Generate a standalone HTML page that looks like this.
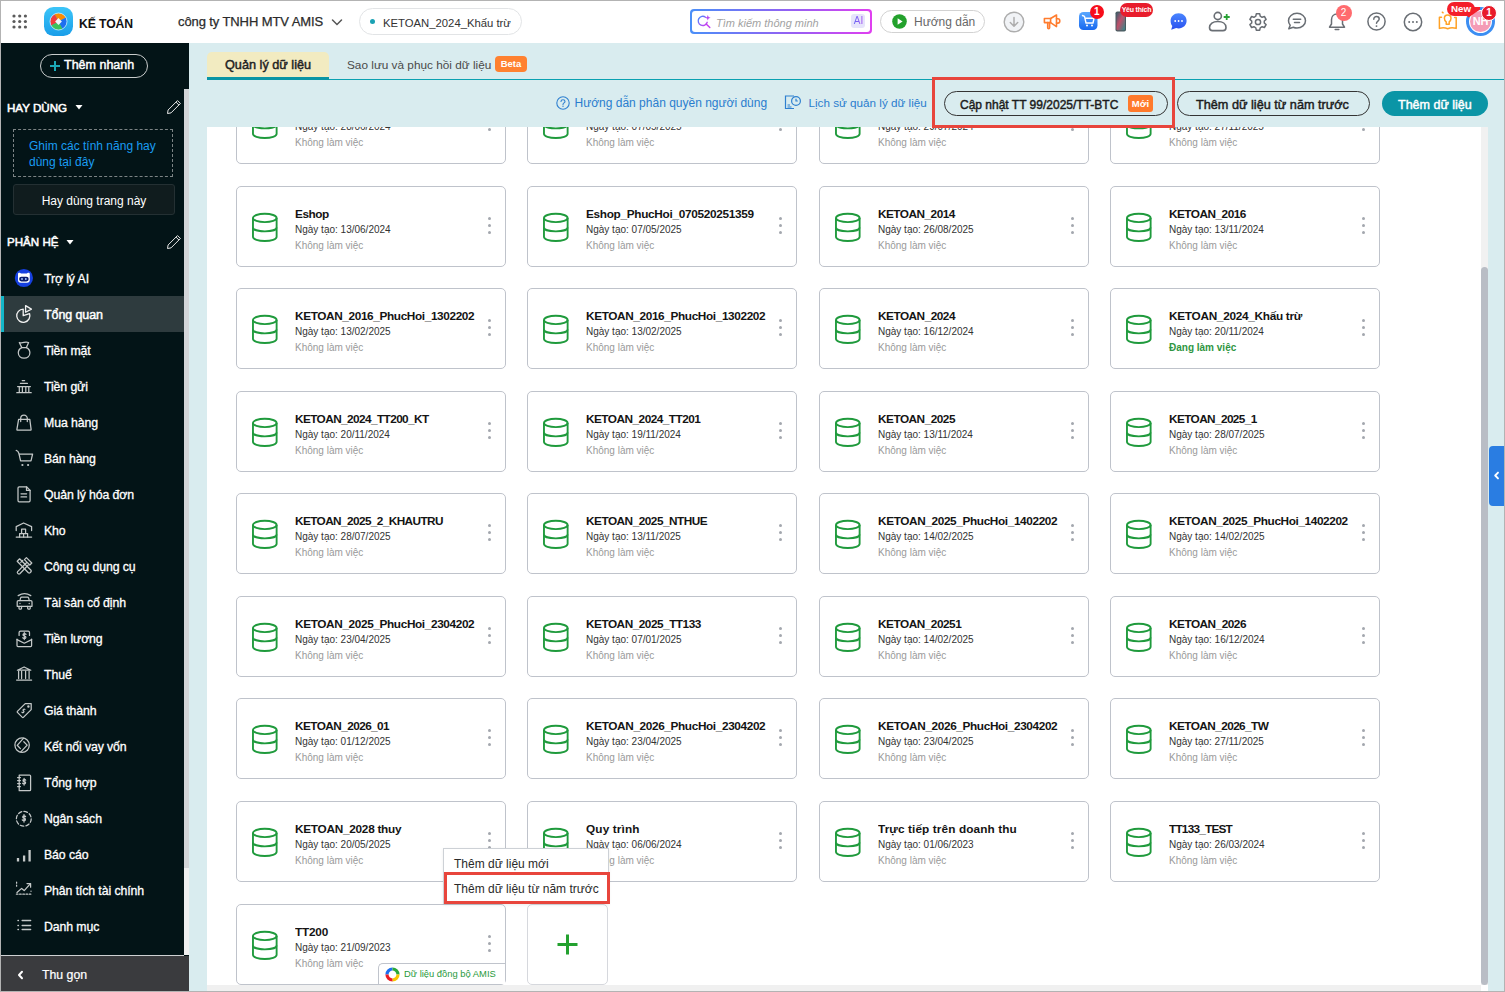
<!DOCTYPE html>
<html><head><meta charset="utf-8"><style>
*{box-sizing:border-box;margin:0;padding:0}
html,body{width:1505px;height:992px;overflow:hidden;background:#d9ecef;font-family:"Liberation Sans", sans-serif;color:#1f1f1f}
.a{position:absolute}
#frame{position:absolute;left:0;top:0;width:1505px;height:992px;border:1px solid #b3b3b3;pointer-events:none;z-index:50}
#hdr{position:absolute;left:0;top:0;width:1505px;height:43px;background:#fff}
#side{position:absolute;left:0;top:43px;width:189px;height:949px;background:#031417}
.si{position:absolute;left:1px;width:183px;height:36px}
.si.act{background:#2e3b3e}
.si.act:before{content:"";position:absolute;left:0;top:0;width:3px;height:36px;background:#13b6c8}
.sic{position:absolute;left:14px;top:8px;width:20px;height:20px}
.sic svg{display:block}
.stx{position:absolute;left:43px;top:10.6px;font-size:12.3px;line-height:16px;color:#fff;white-space:nowrap;letter-spacing:-0.1px;-webkit-text-stroke:0.3px #fff}
.si.act .stx{font-size:12.5px;-webkit-text-stroke:0.45px #fff}
#main{position:absolute;left:189px;top:43px;width:1316px;height:949px;background:#d9ecef}
#panel{position:absolute;left:207px;top:127px;width:1274px;height:858px;background:#fff;overflow:hidden}
.card{position:absolute;width:270px;height:81px;border:1px solid #bfc3cb;border-radius:5px;background:#fff}
.card .db{position:absolute;left:13.6px;top:24.6px}
.card .tt{position:absolute;left:58px;top:20px;width:180px;overflow:hidden;white-space:nowrap;font-size:11.8px;font-weight:bold;line-height:14px;color:#141414}
.card .dt{position:absolute;left:58px;top:36px;font-size:10px;line-height:13px;color:#333;white-space:nowrap}
.card .st{position:absolute;left:58px;top:52px;font-size:10px;line-height:13px;color:#9a9a9a;white-space:nowrap}
.card .st.act{color:#2f9642;font-weight:bold}
.kb{position:absolute;left:251px;top:30px;width:5px;height:20px}
.kb i{display:block;width:3px;height:3px;border-radius:50%;background:#a3a7ae;margin:0 0 3.8px 0}
</style></head><body>

<div id="hdr">
 <svg class="a" style="left:11px;top:13px" width="18" height="17" viewBox="0 0 18 17"><g fill="#5b5b5b"><circle cx="3" cy="3" r="1.6"/><circle cx="8.7" cy="3" r="1.6"/><circle cx="14.4" cy="3" r="1.6"/><circle cx="3" cy="8.5" r="1.6"/><circle cx="8.7" cy="8.5" r="1.6"/><circle cx="14.4" cy="8.5" r="1.6"/><circle cx="3" cy="14" r="1.6"/><circle cx="8.7" cy="14" r="1.6"/><circle cx="14.4" cy="14" r="1.6"/></g></svg>
 <svg class="a" style="left:44px;top:7px" width="29" height="29" viewBox="0 0 29 29"><defs><linearGradient id="lg1" x1="0" y1="0" x2="0" y2="1"><stop offset="0" stop-color="#3cc5f8"/><stop offset="1" stop-color="#1a9ee9"/></linearGradient><clipPath id="cc"><circle cx="14.5" cy="14.5" r="8.3"/></clipPath></defs><rect x="0" y="0" width="29" height="29" rx="9.5" fill="url(#lg1)"/><g clip-path="url(#cc)" transform="rotate(62 14.5 14.5)"><rect x="4" y="4" width="10.5" height="10.5" fill="#fb8c00"/><rect x="14.5" y="4" width="10.5" height="10.5" fill="#1e6ff0"/><rect x="14.5" y="14.5" width="10.5" height="10.5" fill="#3cc25a"/><rect x="4" y="14.5" width="10.5" height="10.5" fill="#f23b3b"/></g><rect x="12.1" y="12.1" width="4.8" height="4.8" fill="#eef6fb" transform="rotate(45 14.5 14.5)"/><circle cx="14.5" cy="14.5" r="8.5" fill="none" stroke="#e8f6fd" stroke-width="0.7"/></svg>
 <div class="a" style="left:79px;top:16px;font-size:12.2px;font-weight:bold;line-height:16px;color:#111;letter-spacing:-0.1px">KẾ TOÁN</div>
 <div class="a" style="left:178px;top:13px;font-size:13px;line-height:17px;color:#2b2b2b;letter-spacing:-0.1px;-webkit-text-stroke:0.25px #2b2b2b">công ty TNHH MTV AMIS</div>
 <svg class="a" style="left:331px;top:17px" width="12" height="10" viewBox="0 0 12 10"><path d="M1.5 3L6 7.5L10.5 3" fill="none" stroke="#555" stroke-width="1.5" stroke-linecap="round"/></svg>
 <div class="a" style="left:359px;top:8px;width:163px;height:27px;border:1px solid #e2e4e6;border-radius:14px"></div>
 <div class="a" style="left:369.5px;top:18.6px;width:5.5px;height:5.5px;border-radius:50%;background:#1aa2b4"></div>
 <div class="a" style="left:383px;top:16px;font-size:11.3px;line-height:15px;color:#333;white-space:nowrap">KETOAN_2024_Khấu trừ</div>

 <div class="a" style="left:690px;top:9px;width:182px;height:25px;border-radius:4px;background:linear-gradient(90deg,#4a8ff8,#9b5cf2 60%,#e03ff0)"></div>
 <div class="a" style="left:691.6px;top:10.6px;width:178.8px;height:21.8px;border-radius:3px;background:#fff"></div>
 <svg class="a" style="left:697px;top:14px" width="15" height="15" viewBox="0 0 15 15"><defs><linearGradient id="lg2" x1="0" y1="0" x2="1" y2="1"><stop offset="0" stop-color="#3f8cff"/><stop offset="1" stop-color="#d33cf0"/></linearGradient></defs><path d="M8.5 3.2A4.6 4.6 0 1 0 10.2 8.3" fill="none" stroke="url(#lg2)" stroke-width="1.4" stroke-linecap="round"/><path d="M9.2 10L12.8 13.6" stroke="#c43cf0" stroke-width="1.4" stroke-linecap="round"/><path d="M10.8 1L11.6 3L13.6 3.8L11.6 4.6L10.8 6.6L10 4.6L8 3.8L10 3Z" fill="#b84cf2"/></svg>
 <div class="a" style="left:716px;top:16px;font-size:11px;font-style:italic;line-height:14px;color:#a2a2a2;white-space:nowrap">Tìm kiếm thông minh</div>
 <div class="a" style="left:851px;top:14px;width:14px;height:14px;border-radius:3px;background:#e6e4fb"></div>
 <div class="a" style="left:852px;top:15px;width:13px;font-size:10px;line-height:12px;text-align:center;background:linear-gradient(90deg,#5a6cf5,#b24cf0);-webkit-background-clip:text;color:transparent">AI</div>

 <div class="a" style="left:880px;top:10px;width:105px;height:23px;border:1px solid #d2d2d2;border-radius:12px"></div>
 <svg class="a" style="left:892px;top:13.5px" width="15" height="15" viewBox="0 0 15 15"><circle cx="7.5" cy="7.5" r="7.3" fill="#23a12c"/><path d="M5.6 4.2L10.6 7.5L5.6 10.8Z" fill="#fff"/></svg>
 <div class="a" style="left:914px;top:15px;font-size:12px;line-height:15px;color:#676767;white-space:nowrap">Hướng dẫn</div>

 <svg class="a" style="left:1003px;top:10.5px" width="22" height="22" viewBox="0 0 22 22"><circle cx="11" cy="11" r="9.8" fill="#f1f3f6" stroke="#adadad" stroke-width="1.4"/><path d="M11 6.5V15M7.3 11.5L11 15.2L14.7 11.5" fill="none" stroke="#adadad" stroke-width="1.5" stroke-linecap="round" stroke-linejoin="round"/></svg>
 <svg class="a" style="left:1042px;top:13px" width="20" height="18" viewBox="0 0 20 18"><g fill="none" stroke="#ff7c2e" stroke-width="1.6" stroke-linejoin="round" stroke-linecap="round"><path d="M2.4 5.5H8.6V9.6H2.4Z"/><path d="M8.6 5.5L14.5 2V13.6L8.6 9.6"/><path d="M14.5 5.7H15.8C17.2 5.7 17.8 6.8 17.8 7.9C17.8 9 17.2 10.1 15.8 10.1H14.5"/><path d="M5.7 9.6V14.8C5.7 15.5 6.1 15.8 6.7 15.8C7.3 15.8 7.6 15.5 7.6 14.8V9.6"/></g></svg>
 <svg class="a" style="left:1079px;top:12px" width="19" height="18" viewBox="0 0 19 18"><defs><linearGradient id="lg3" x1="0" y1="0" x2="0" y2="1"><stop offset="0" stop-color="#5aa8ff"/><stop offset="1" stop-color="#1768ef"/></linearGradient></defs><rect width="18.5" height="18" rx="4.5" fill="url(#lg3)"/><path d="M3.5 3.5L5.5 4.3L7 11H14L15 6.3H6" fill="none" stroke="#fff" stroke-width="1.4" stroke-linejoin="round" stroke-linecap="round"/><circle cx="8" cy="13.6" r="1" fill="#fff"/><circle cx="13" cy="13.6" r="1" fill="#fff"/></svg>
 <div class="a" style="left:1089.5px;top:4.5px;width:14.5px;height:14.5px;border-radius:50%;background:#f70d1a;color:#fff;font-size:10px;font-weight:bold;line-height:14.5px;text-align:center">1</div>

 <svg class="a" style="left:1115px;top:11px" width="12" height="21" viewBox="0 0 12 21"><defs><linearGradient id="lg4" x1="0" y1="0" x2="1" y2="1"><stop offset="0" stop-color="#3b5f70"/><stop offset="0.45" stop-color="#c0506a"/><stop offset="1" stop-color="#2f8a8a"/></linearGradient></defs><rect x="0.5" y="0.5" width="10.5" height="20" rx="1.8" fill="#4a5a60"/><rect x="1.5" y="1.8" width="8.5" height="17.4" rx="1" fill="url(#lg4)"/></svg>
 <div class="a" style="left:1120px;top:3px;width:33px;height:14px;border-radius:7px;background:#e81c2c;color:#fff;font-size:7px;font-weight:bold;line-height:14px;text-align:center;white-space:nowrap;letter-spacing:-0.2px">Yêu thích</div>

 <svg class="a" style="left:1169px;top:12px" width="19" height="19" viewBox="0 0 19 19"><defs><linearGradient id="lg5" x1="0" y1="0" x2="0" y2="1"><stop offset="0" stop-color="#4a86ff"/><stop offset="1" stop-color="#2a50ee"/></linearGradient></defs><path d="M9.6 1.2C14.2 1.2 17.6 4.5 17.6 8.8S14.2 16.4 9.6 16.4C8.7 16.4 7.9 16.3 7.2 16L2.2 17.8L3.3 14C2.2 12.7 1.6 10.9 1.6 8.8C1.6 4.5 5 1.2 9.6 1.2Z" fill="url(#lg5)"/><circle cx="6.2" cy="9" r="0.9" fill="#fff"/><circle cx="9.6" cy="9" r="0.9" fill="#fff"/><circle cx="13" cy="9" r="0.9" fill="#fff"/></svg>
 <svg class="a" style="left:1207px;top:11px" width="24" height="21" viewBox="0 0 24 21"><g fill="none" stroke="#696e74" stroke-width="1.6"><circle cx="10.8" cy="5" r="3.6"/><path d="M2.5 16.5C2.5 12.8 6 10.5 10.8 10.5S19 12.8 19 16.5C19 18.8 17.5 19.6 16 19.6H5.5C4 19.6 2.5 18.8 2.5 16.5Z"/></g><path d="M19.7 3V9M16.7 6H22.7" stroke="#2aa236" stroke-width="1.8"/></svg>
 <svg class="a" style="left:1248px;top:12px" width="20" height="20" viewBox="0 0 20 20"><path d="M8.3 1.8H11.7L12.2 4.2L14.1 5.3L16.4 4.5L18.1 7.4L16.3 9V11L18.1 12.6L16.4 15.5L14.1 14.7L12.2 15.8L11.7 18.2H8.3L7.8 15.8L5.9 14.7L3.6 15.5L1.9 12.6L3.7 11V9L1.9 7.4L3.6 4.5L5.9 5.3L7.8 4.2Z" fill="none" stroke="#696e74" stroke-width="1.5" stroke-linejoin="round"/><circle cx="10" cy="10" r="2.6" fill="none" stroke="#696e74" stroke-width="1.5"/></svg>
 <svg class="a" style="left:1287px;top:12px" width="20" height="19" viewBox="0 0 20 19"><path d="M10 1.3C14.7 1.3 18.5 4.7 18.5 8.7S14.7 16.1 10 16.1C8.6 16.1 7.4 15.8 6.3 15.3L1.8 16.8L3.2 13.2C2.1 11.9 1.5 10.4 1.5 8.7C1.5 4.7 5.3 1.3 10 1.3Z" fill="none" stroke="#696e74" stroke-width="1.5" stroke-linejoin="round"/><path d="M6.3 7.2H13.7M7.5 10.4H12.5" stroke="#696e74" stroke-width="1.5" stroke-linecap="round"/></svg>
 <svg class="a" style="left:1327px;top:12px" width="20" height="20" viewBox="0 0 20 20"><path d="M10 2C6.6 2 4.5 4.6 4.5 7.8V12L2.5 15.2H17.5L15.5 12V7.8C15.5 4.6 13.4 2 10 2Z" fill="none" stroke="#696e74" stroke-width="1.5" stroke-linejoin="round"/><path d="M8.2 17.6H11.8" stroke="#696e74" stroke-width="1.5" stroke-linecap="round"/></svg>
 <div class="a" style="left:1335.5px;top:5px;width:16px;height:16px;border-radius:50%;background:#ff6b6e;color:#fff;font-size:10px;line-height:16px;text-align:center">2</div>
 <svg class="a" style="left:1366px;top:11px" width="21" height="21" viewBox="0 0 21 21"><circle cx="10.5" cy="10.5" r="8.6" fill="none" stroke="#696e74" stroke-width="1.5"/><path d="M7.8 8.2C7.8 6.6 9 5.6 10.5 5.6S13.2 6.6 13.2 8.1C13.2 10 10.5 10.2 10.5 12.3" fill="none" stroke="#696e74" stroke-width="1.5" stroke-linecap="round"/><circle cx="10.5" cy="15.1" r="0.95" fill="#696e74"/></svg>
 <svg class="a" style="left:1403px;top:12px" width="20" height="20" viewBox="0 0 20 20"><circle cx="10" cy="10" r="8.7" fill="none" stroke="#696e74" stroke-width="1.5"/><circle cx="6.2" cy="10" r="1" fill="#696e74"/><circle cx="10" cy="10" r="1" fill="#696e74"/><circle cx="13.8" cy="10" r="1" fill="#696e74"/></svg>
 <svg class="a" style="left:1438px;top:10px" width="20" height="20" viewBox="0 0 20 20"><g fill="none" stroke="#ffa126" stroke-width="1.5" stroke-linejoin="round" stroke-linecap="round"><path d="M3.5 7.2H1.4V18.4C4.4 17.5 7 17.6 9.7 18.7C12.4 17.6 15 17.5 18.2 18.4V7.4H16.6"/><path d="M8.2 11.8C7.2 11.1 6.4 10 6.4 8.3C6.4 6.4 7.9 4.9 9.7 4.9S13 6.4 13 8.3C13 10 12.2 11.1 11.2 11.8V14.2H8.2Z"/><path d="M4.3 2.2L5.1 2.8"/></g></svg>
 
 <div class="a" style="left:1466px;top:7px;width:29px;height:29px;border-radius:50%;background:#3c8ef2"></div>
 <div class="a" style="left:1469px;top:10px;width:23px;height:23px;border-radius:50%;background:#fff"></div>
 <div class="a" style="left:1470px;top:11px;width:21px;height:21px;border-radius:50%;background:#f49bb6;color:#fff;font-size:11px;font-weight:bold;line-height:21px;text-align:center;letter-spacing:-0.3px">NH</div>
 <svg class="a" style="left:1460px;top:5px" width="22" height="14" viewBox="0 0 22 14"><path d="M5 8L8.5 12.6L20 4.6V2H12Z" fill="#f41f2a"/></svg><div class="a" style="left:1447px;top:2px;width:28px;height:14px;border-radius:7px;background:#f41f2a;color:#fff;font-size:9.8px;font-weight:bold;line-height:14px;text-align:center;letter-spacing:-0.1px">New</div>
 <div class="a" style="left:1481px;top:5px;width:16px;height:16px;border-radius:50%;background:#e81b2b;border:1px solid #fff;color:#fff;font-size:10px;font-weight:bold;line-height:14px;text-align:center">1</div>
</div>

<div id="side"></div>
<div id="main"></div>
<div class="a" style="left:207px;top:79px;width:1298px;height:1px;background:#0aa1b1"></div>
<div class="a" style="left:207px;top:52px;width:122px;height:28px;border-radius:5px 5px 0 0;background:#f2ebc1"></div>
<div class="a" style="left:207px;top:77px;width:122px;height:3px;background:#0a95a5"></div>
<div class="a" style="left:225px;top:58px;font-size:12.7px;line-height:15px;color:#222;-webkit-text-stroke:0.45px #222;white-space:nowrap">Quản lý dữ liệu</div>
<div class="a" style="left:347px;top:58px;font-size:11.8px;line-height:15px;color:#4a4a4a;white-space:nowrap">Sao lưu và phục hồi dữ liệu</div>
<div class="a" style="left:495px;top:56px;width:32px;height:16px;border-radius:4px;background:#ff8130;color:#fff;font-size:9.5px;font-weight:bold;line-height:16px;text-align:center">Beta</div>

<svg class="a" style="left:556px;top:96px" width="14" height="14" viewBox="0 0 14 14"><circle cx="7" cy="7" r="6.2" fill="none" stroke="#2f80d0" stroke-width="1.1"/><path d="M5 5.5C5 4.4 5.9 3.7 7 3.7S9 4.4 9 5.4C9 6.8 7 6.9 7 8.4" fill="none" stroke="#2f80d0" stroke-width="1.1" stroke-linecap="round"/><circle cx="7" cy="10.2" r="0.7" fill="#2f80d0"/></svg>
<div class="a" style="left:574.5px;top:96px;font-size:12px;line-height:15px;color:#2a7dce;white-space:nowrap">Hướng dẫn phân quyền người dùng</div>
<svg class="a" style="left:784px;top:95px" width="18" height="15" viewBox="0 0 18 15"><g fill="none" stroke="#2f80d0" stroke-width="1.2"><path d="M10 1H1.5V13.5H10"/><path d="M3.5 10H6M3.5 12H7.5"/><circle cx="12" cy="6" r="4.4"/><path d="M12 3.8V6H13.8"/></g></svg>
<div class="a" style="left:808.5px;top:95px;font-size:11.7px;line-height:15px;color:#2a7dce;white-space:nowrap">Lịch sử quản lý dữ liệu</div>

<div class="a" style="left:944px;top:91px;width:224px;height:25px;border:1px solid #343434;border-radius:13px"></div>
<div class="a" style="left:960px;top:97.6px;font-size:12px;line-height:15px;color:#1c1c1c;-webkit-text-stroke:0.45px #1c1c1c;white-space:nowrap">Cập nhật TT 99/2025/TT-BTC</div>
<div class="a" style="left:1128px;top:95px;width:25px;height:17px;border-radius:3px;background:#ff7a2c;color:#fff;font-size:9.5px;font-weight:bold;line-height:17px;text-align:center">Mới</div>
<div class="a" style="left:932px;top:77px;width:243px;height:51px;border:3px solid #e8453c;z-index:10"></div>
<div class="a" style="left:1177px;top:91px;width:193px;height:25px;border:1px solid #343434;border-radius:13px"></div>
<div class="a" style="left:1196px;top:97.6px;font-size:12.7px;line-height:15px;color:#1c1c1c;-webkit-text-stroke:0.45px #1c1c1c;white-space:nowrap">Thêm dữ liệu từ năm trước</div>
<div class="a" style="left:1382px;top:91px;width:106px;height:25px;border-radius:13px;background:#0b95a6"></div>
<div class="a" style="left:1398px;top:97.6px;font-size:12.5px;line-height:15px;color:#fff;-webkit-text-stroke:0.45px #fff;white-space:nowrap">Thêm dữ liệu</div>

<div class="a" style="left:1481px;top:127px;width:7px;height:858px;background:#f1f1f1"></div>
<div class="a" style="left:1481px;top:267px;width:7px;height:718px;border-radius:3.5px;background:#b9bdc5"></div><div class="a" style="left:1481px;top:985px;width:7px;height:6px;background:#fff"></div>
<div class="a" style="left:207px;top:985px;width:1274px;height:6px;background:#f0f0f0"></div>
<div class="a" style="left:1489px;top:446px;width:16px;height:60px;border-radius:4px 0 0 4px;background:#2a7de2"></div>
<svg class="a" style="left:1492px;top:470px" width="8" height="10" viewBox="0 0 8 10"><path d="M6 2.6L3.2 5.5L6 8.4" fill="none" stroke="#fff" stroke-width="1.9" stroke-linecap="round" stroke-linejoin="round"/></svg>

<div id="panel"><div style="position:absolute;left:-207px;top:-127px;width:1505px;height:992px">
<div class="card" style="left:236px;top:83.0px"><svg class="db" width="27.6" height="30" viewBox="-1 -1 28 30.4"><g fill="none" stroke="#1f9a3c" stroke-width="1.9"><ellipse cx="13" cy="5" rx="12" ry="4.2"/><path d="M1 5V24C1 26.6 6.4 28.4 13 28.4S25 26.6 25 24V5"/><path d="M1 14.6C1 17 6.4 18.6 13 18.6S25 17 25 14.6"/></g></svg><div class="tt" style="letter-spacing:-0.4px">KETOAN_2012</div><div class="dt">Ngày tạo: 28/06/2024</div><div class="st">Không làm việc</div><div class="kb"><i></i><i></i><i></i></div></div>
<div class="card" style="left:527px;top:83.0px"><svg class="db" width="27.6" height="30" viewBox="-1 -1 28 30.4"><g fill="none" stroke="#1f9a3c" stroke-width="1.9"><ellipse cx="13" cy="5" rx="12" ry="4.2"/><path d="M1 5V24C1 26.6 6.4 28.4 13 28.4S25 26.6 25 24V5"/><path d="M1 14.6C1 17 6.4 18.6 13 18.6S25 17 25 14.6"/></g></svg><div class="tt" style="letter-spacing:-0.4px">KETOAN_2013</div><div class="dt">Ngày tạo: 07/05/2025</div><div class="st">Không làm việc</div><div class="kb"><i></i><i></i><i></i></div></div>
<div class="card" style="left:819px;top:83.0px"><svg class="db" width="27.6" height="30" viewBox="-1 -1 28 30.4"><g fill="none" stroke="#1f9a3c" stroke-width="1.9"><ellipse cx="13" cy="5" rx="12" ry="4.2"/><path d="M1 5V24C1 26.6 6.4 28.4 13 28.4S25 26.6 25 24V5"/><path d="M1 14.6C1 17 6.4 18.6 13 18.6S25 17 25 14.6"/></g></svg><div class="tt" style="letter-spacing:-0.4px">KETOAN_2013_1</div><div class="dt">Ngày tạo: 29/07/2024</div><div class="st">Không làm việc</div><div class="kb"><i></i><i></i><i></i></div></div>
<div class="card" style="left:1110px;top:83.0px"><svg class="db" width="27.6" height="30" viewBox="-1 -1 28 30.4"><g fill="none" stroke="#1f9a3c" stroke-width="1.9"><ellipse cx="13" cy="5" rx="12" ry="4.2"/><path d="M1 5V24C1 26.6 6.4 28.4 13 28.4S25 26.6 25 24V5"/><path d="M1 14.6C1 17 6.4 18.6 13 18.6S25 17 25 14.6"/></g></svg><div class="tt" style="letter-spacing:-0.4px">KETOAN_2013_2</div><div class="dt">Ngày tạo: 27/11/2025</div><div class="st">Không làm việc</div><div class="kb"><i></i><i></i><i></i></div></div>
<div class="card" style="left:236px;top:186.0px"><svg class="db" width="27.6" height="30" viewBox="-1 -1 28 30.4"><g fill="none" stroke="#1f9a3c" stroke-width="1.9"><ellipse cx="13" cy="5" rx="12" ry="4.2"/><path d="M1 5V24C1 26.6 6.4 28.4 13 28.4S25 26.6 25 24V5"/><path d="M1 14.6C1 17 6.4 18.6 13 18.6S25 17 25 14.6"/></g></svg><div class="tt" style="letter-spacing:-0.452px">Eshop</div><div class="dt">Ngày tạo: 13/06/2024</div><div class="st">Không làm việc</div><div class="kb"><i></i><i></i><i></i></div></div>
<div class="card" style="left:527px;top:186.0px"><svg class="db" width="27.6" height="30" viewBox="-1 -1 28 30.4"><g fill="none" stroke="#1f9a3c" stroke-width="1.9"><ellipse cx="13" cy="5" rx="12" ry="4.2"/><path d="M1 5V24C1 26.6 6.4 28.4 13 28.4S25 26.6 25 24V5"/><path d="M1 14.6C1 17 6.4 18.6 13 18.6S25 17 25 14.6"/></g></svg><div class="tt" style="letter-spacing:-0.31px">Eshop_PhucHoi_070520251359</div><div class="dt">Ngày tạo: 07/05/2025</div><div class="st">Không làm việc</div><div class="kb"><i></i><i></i><i></i></div></div>
<div class="card" style="left:819px;top:186.0px"><svg class="db" width="27.6" height="30" viewBox="-1 -1 28 30.4"><g fill="none" stroke="#1f9a3c" stroke-width="1.9"><ellipse cx="13" cy="5" rx="12" ry="4.2"/><path d="M1 5V24C1 26.6 6.4 28.4 13 28.4S25 26.6 25 24V5"/><path d="M1 14.6C1 17 6.4 18.6 13 18.6S25 17 25 14.6"/></g></svg><div class="tt" style="letter-spacing:-0.51px">KETOAN_2014</div><div class="dt">Ngày tạo: 26/08/2025</div><div class="st">Không làm việc</div><div class="kb"><i></i><i></i><i></i></div></div>
<div class="card" style="left:1110px;top:186.0px"><svg class="db" width="27.6" height="30" viewBox="-1 -1 28 30.4"><g fill="none" stroke="#1f9a3c" stroke-width="1.9"><ellipse cx="13" cy="5" rx="12" ry="4.2"/><path d="M1 5V24C1 26.6 6.4 28.4 13 28.4S25 26.6 25 24V5"/><path d="M1 14.6C1 17 6.4 18.6 13 18.6S25 17 25 14.6"/></g></svg><div class="tt" style="letter-spacing:-0.51px">KETOAN_2016</div><div class="dt">Ngày tạo: 13/11/2024</div><div class="st">Không làm việc</div><div class="kb"><i></i><i></i><i></i></div></div>
<div class="card" style="left:236px;top:288.0px"><svg class="db" width="27.6" height="30" viewBox="-1 -1 28 30.4"><g fill="none" stroke="#1f9a3c" stroke-width="1.9"><ellipse cx="13" cy="5" rx="12" ry="4.2"/><path d="M1 5V24C1 26.6 6.4 28.4 13 28.4S25 26.6 25 24V5"/><path d="M1 14.6C1 17 6.4 18.6 13 18.6S25 17 25 14.6"/></g></svg><div class="tt" style="letter-spacing:-0.374px">KETOAN_2016_PhucHoi_1302202</div><div class="dt">Ngày tạo: 13/02/2025</div><div class="st">Không làm việc</div><div class="kb"><i></i><i></i><i></i></div></div>
<div class="card" style="left:527px;top:288.0px"><svg class="db" width="27.6" height="30" viewBox="-1 -1 28 30.4"><g fill="none" stroke="#1f9a3c" stroke-width="1.9"><ellipse cx="13" cy="5" rx="12" ry="4.2"/><path d="M1 5V24C1 26.6 6.4 28.4 13 28.4S25 26.6 25 24V5"/><path d="M1 14.6C1 17 6.4 18.6 13 18.6S25 17 25 14.6"/></g></svg><div class="tt" style="letter-spacing:-0.374px">KETOAN_2016_PhucHoi_1302202</div><div class="dt">Ngày tạo: 13/02/2025</div><div class="st">Không làm việc</div><div class="kb"><i></i><i></i><i></i></div></div>
<div class="card" style="left:819px;top:288.0px"><svg class="db" width="27.6" height="30" viewBox="-1 -1 28 30.4"><g fill="none" stroke="#1f9a3c" stroke-width="1.9"><ellipse cx="13" cy="5" rx="12" ry="4.2"/><path d="M1 5V24C1 26.6 6.4 28.4 13 28.4S25 26.6 25 24V5"/><path d="M1 14.6C1 17 6.4 18.6 13 18.6S25 17 25 14.6"/></g></svg><div class="tt" style="letter-spacing:-0.492px">KETOAN_2024</div><div class="dt">Ngày tạo: 16/12/2024</div><div class="st">Không làm việc</div><div class="kb"><i></i><i></i><i></i></div></div>
<div class="card" style="left:1110px;top:288.0px"><svg class="db" width="27.6" height="30" viewBox="-1 -1 28 30.4"><g fill="none" stroke="#1f9a3c" stroke-width="1.9"><ellipse cx="13" cy="5" rx="12" ry="4.2"/><path d="M1 5V24C1 26.6 6.4 28.4 13 28.4S25 26.6 25 24V5"/><path d="M1 14.6C1 17 6.4 18.6 13 18.6S25 17 25 14.6"/></g></svg><div class="tt" style="letter-spacing:-0.29px">KETOAN_2024_Khấu trừ</div><div class="dt">Ngày tạo: 20/11/2024</div><div class="st act">Đang làm việc</div><div class="kb"><i></i><i></i><i></i></div></div>
<div class="card" style="left:236px;top:391.0px"><svg class="db" width="27.6" height="30" viewBox="-1 -1 28 30.4"><g fill="none" stroke="#1f9a3c" stroke-width="1.9"><ellipse cx="13" cy="5" rx="12" ry="4.2"/><path d="M1 5V24C1 26.6 6.4 28.4 13 28.4S25 26.6 25 24V5"/><path d="M1 14.6C1 17 6.4 18.6 13 18.6S25 17 25 14.6"/></g></svg><div class="tt" style="letter-spacing:-0.587px">KETOAN_2024_TT200_KT</div><div class="dt">Ngày tạo: 20/11/2024</div><div class="st">Không làm việc</div><div class="kb"><i></i><i></i><i></i></div></div>
<div class="card" style="left:527px;top:391.0px"><svg class="db" width="27.6" height="30" viewBox="-1 -1 28 30.4"><g fill="none" stroke="#1f9a3c" stroke-width="1.9"><ellipse cx="13" cy="5" rx="12" ry="4.2"/><path d="M1 5V24C1 26.6 6.4 28.4 13 28.4S25 26.6 25 24V5"/><path d="M1 14.6C1 17 6.4 18.6 13 18.6S25 17 25 14.6"/></g></svg><div class="tt" style="letter-spacing:-0.509px">KETOAN_2024_TT201</div><div class="dt">Ngày tạo: 19/11/2024</div><div class="st">Không làm việc</div><div class="kb"><i></i><i></i><i></i></div></div>
<div class="card" style="left:819px;top:391.0px"><svg class="db" width="27.6" height="30" viewBox="-1 -1 28 30.4"><g fill="none" stroke="#1f9a3c" stroke-width="1.9"><ellipse cx="13" cy="5" rx="12" ry="4.2"/><path d="M1 5V24C1 26.6 6.4 28.4 13 28.4S25 26.6 25 24V5"/><path d="M1 14.6C1 17 6.4 18.6 13 18.6S25 17 25 14.6"/></g></svg><div class="tt" style="letter-spacing:-0.492px">KETOAN_2025</div><div class="dt">Ngày tạo: 13/11/2024</div><div class="st">Không làm việc</div><div class="kb"><i></i><i></i><i></i></div></div>
<div class="card" style="left:1110px;top:391.0px"><svg class="db" width="27.6" height="30" viewBox="-1 -1 28 30.4"><g fill="none" stroke="#1f9a3c" stroke-width="1.9"><ellipse cx="13" cy="5" rx="12" ry="4.2"/><path d="M1 5V24C1 26.6 6.4 28.4 13 28.4S25 26.6 25 24V5"/><path d="M1 14.6C1 17 6.4 18.6 13 18.6S25 17 25 14.6"/></g></svg><div class="tt" style="letter-spacing:-0.602px">KETOAN_2025_1</div><div class="dt">Ngày tạo: 28/07/2025</div><div class="st">Không làm việc</div><div class="kb"><i></i><i></i><i></i></div></div>
<div class="card" style="left:236px;top:493.0px"><svg class="db" width="27.6" height="30" viewBox="-1 -1 28 30.4"><g fill="none" stroke="#1f9a3c" stroke-width="1.9"><ellipse cx="13" cy="5" rx="12" ry="4.2"/><path d="M1 5V24C1 26.6 6.4 28.4 13 28.4S25 26.6 25 24V5"/><path d="M1 14.6C1 17 6.4 18.6 13 18.6S25 17 25 14.6"/></g></svg><div class="tt" style="letter-spacing:-0.596px">KETOAN_2025_2_KHAUTRU</div><div class="dt">Ngày tạo: 28/07/2025</div><div class="st">Không làm việc</div><div class="kb"><i></i><i></i><i></i></div></div>
<div class="card" style="left:527px;top:493.0px"><svg class="db" width="27.6" height="30" viewBox="-1 -1 28 30.4"><g fill="none" stroke="#1f9a3c" stroke-width="1.9"><ellipse cx="13" cy="5" rx="12" ry="4.2"/><path d="M1 5V24C1 26.6 6.4 28.4 13 28.4S25 26.6 25 24V5"/><path d="M1 14.6C1 17 6.4 18.6 13 18.6S25 17 25 14.6"/></g></svg><div class="tt" style="letter-spacing:-0.494px">KETOAN_2025_NTHUE</div><div class="dt">Ngày tạo: 13/11/2025</div><div class="st">Không làm việc</div><div class="kb"><i></i><i></i><i></i></div></div>
<div class="card" style="left:819px;top:493.0px"><svg class="db" width="27.6" height="30" viewBox="-1 -1 28 30.4"><g fill="none" stroke="#1f9a3c" stroke-width="1.9"><ellipse cx="13" cy="5" rx="12" ry="4.2"/><path d="M1 5V24C1 26.6 6.4 28.4 13 28.4S25 26.6 25 24V5"/><path d="M1 14.6C1 17 6.4 18.6 13 18.6S25 17 25 14.6"/></g></svg><div class="tt" style="letter-spacing:-0.374px">KETOAN_2025_PhucHoi_1402202</div><div class="dt">Ngày tạo: 14/02/2025</div><div class="st">Không làm việc</div><div class="kb"><i></i><i></i><i></i></div></div>
<div class="card" style="left:1110px;top:493.0px"><svg class="db" width="27.6" height="30" viewBox="-1 -1 28 30.4"><g fill="none" stroke="#1f9a3c" stroke-width="1.9"><ellipse cx="13" cy="5" rx="12" ry="4.2"/><path d="M1 5V24C1 26.6 6.4 28.4 13 28.4S25 26.6 25 24V5"/><path d="M1 14.6C1 17 6.4 18.6 13 18.6S25 17 25 14.6"/></g></svg><div class="tt" style="letter-spacing:-0.389px">KETOAN_2025_PhucHoi_1402202</div><div class="dt">Ngày tạo: 14/02/2025</div><div class="st">Không làm việc</div><div class="kb"><i></i><i></i><i></i></div></div>
<div class="card" style="left:236px;top:596.0px"><svg class="db" width="27.6" height="30" viewBox="-1 -1 28 30.4"><g fill="none" stroke="#1f9a3c" stroke-width="1.9"><ellipse cx="13" cy="5" rx="12" ry="4.2"/><path d="M1 5V24C1 26.6 6.4 28.4 13 28.4S25 26.6 25 24V5"/><path d="M1 14.6C1 17 6.4 18.6 13 18.6S25 17 25 14.6"/></g></svg><div class="tt" style="letter-spacing:-0.37px">KETOAN_2025_PhucHoi_2304202</div><div class="dt">Ngày tạo: 23/04/2025</div><div class="st">Không làm việc</div><div class="kb"><i></i><i></i><i></i></div></div>
<div class="card" style="left:527px;top:596.0px"><svg class="db" width="27.6" height="30" viewBox="-1 -1 28 30.4"><g fill="none" stroke="#1f9a3c" stroke-width="1.9"><ellipse cx="13" cy="5" rx="12" ry="4.2"/><path d="M1 5V24C1 26.6 6.4 28.4 13 28.4S25 26.6 25 24V5"/><path d="M1 14.6C1 17 6.4 18.6 13 18.6S25 17 25 14.6"/></g></svg><div class="tt" style="letter-spacing:-0.486px">KETOAN_2025_TT133</div><div class="dt">Ngày tạo: 07/01/2025</div><div class="st">Không làm việc</div><div class="kb"><i></i><i></i><i></i></div></div>
<div class="card" style="left:819px;top:596.0px"><svg class="db" width="27.6" height="30" viewBox="-1 -1 28 30.4"><g fill="none" stroke="#1f9a3c" stroke-width="1.9"><ellipse cx="13" cy="5" rx="12" ry="4.2"/><path d="M1 5V24C1 26.6 6.4 28.4 13 28.4S25 26.6 25 24V5"/><path d="M1 14.6C1 17 6.4 18.6 13 18.6S25 17 25 14.6"/></g></svg><div class="tt" style="letter-spacing:-0.473px">KETOAN_20251</div><div class="dt">Ngày tạo: 14/02/2025</div><div class="st">Không làm việc</div><div class="kb"><i></i><i></i><i></i></div></div>
<div class="card" style="left:1110px;top:596.0px"><svg class="db" width="27.6" height="30" viewBox="-1 -1 28 30.4"><g fill="none" stroke="#1f9a3c" stroke-width="1.9"><ellipse cx="13" cy="5" rx="12" ry="4.2"/><path d="M1 5V24C1 26.6 6.4 28.4 13 28.4S25 26.6 25 24V5"/><path d="M1 14.6C1 17 6.4 18.6 13 18.6S25 17 25 14.6"/></g></svg><div class="tt" style="letter-spacing:-0.492px">KETOAN_2026</div><div class="dt">Ngày tạo: 16/12/2024</div><div class="st">Không làm việc</div><div class="kb"><i></i><i></i><i></i></div></div>
<div class="card" style="left:236px;top:698.0px"><svg class="db" width="27.6" height="30" viewBox="-1 -1 28 30.4"><g fill="none" stroke="#1f9a3c" stroke-width="1.9"><ellipse cx="13" cy="5" rx="12" ry="4.2"/><path d="M1 5V24C1 26.6 6.4 28.4 13 28.4S25 26.6 25 24V5"/><path d="M1 14.6C1 17 6.4 18.6 13 18.6S25 17 25 14.6"/></g></svg><div class="tt" style="letter-spacing:-0.571px">KETOAN_2026_01</div><div class="dt">Ngày tạo: 01/12/2025</div><div class="st">Không làm việc</div><div class="kb"><i></i><i></i><i></i></div></div>
<div class="card" style="left:527px;top:698.0px"><svg class="db" width="27.6" height="30" viewBox="-1 -1 28 30.4"><g fill="none" stroke="#1f9a3c" stroke-width="1.9"><ellipse cx="13" cy="5" rx="12" ry="4.2"/><path d="M1 5V24C1 26.6 6.4 28.4 13 28.4S25 26.6 25 24V5"/><path d="M1 14.6C1 17 6.4 18.6 13 18.6S25 17 25 14.6"/></g></svg><div class="tt" style="letter-spacing:-0.37px">KETOAN_2026_PhucHoi_2304202</div><div class="dt">Ngày tạo: 23/04/2025</div><div class="st">Không làm việc</div><div class="kb"><i></i><i></i><i></i></div></div>
<div class="card" style="left:819px;top:698.0px"><svg class="db" width="27.6" height="30" viewBox="-1 -1 28 30.4"><g fill="none" stroke="#1f9a3c" stroke-width="1.9"><ellipse cx="13" cy="5" rx="12" ry="4.2"/><path d="M1 5V24C1 26.6 6.4 28.4 13 28.4S25 26.6 25 24V5"/><path d="M1 14.6C1 17 6.4 18.6 13 18.6S25 17 25 14.6"/></g></svg><div class="tt" style="letter-spacing:-0.37px">KETOAN_2026_PhucHoi_2304202</div><div class="dt">Ngày tạo: 23/04/2025</div><div class="st">Không làm việc</div><div class="kb"><i></i><i></i><i></i></div></div>
<div class="card" style="left:1110px;top:698.0px"><svg class="db" width="27.6" height="30" viewBox="-1 -1 28 30.4"><g fill="none" stroke="#1f9a3c" stroke-width="1.9"><ellipse cx="13" cy="5" rx="12" ry="4.2"/><path d="M1 5V24C1 26.6 6.4 28.4 13 28.4S25 26.6 25 24V5"/><path d="M1 14.6C1 17 6.4 18.6 13 18.6S25 17 25 14.6"/></g></svg><div class="tt" style="letter-spacing:-0.572px">KETOAN_2026_TW</div><div class="dt">Ngày tạo: 27/11/2025</div><div class="st">Không làm việc</div><div class="kb"><i></i><i></i><i></i></div></div>
<div class="card" style="left:236px;top:801.0px"><svg class="db" width="27.6" height="30" viewBox="-1 -1 28 30.4"><g fill="none" stroke="#1f9a3c" stroke-width="1.9"><ellipse cx="13" cy="5" rx="12" ry="4.2"/><path d="M1 5V24C1 26.6 6.4 28.4 13 28.4S25 26.6 25 24V5"/><path d="M1 14.6C1 17 6.4 18.6 13 18.6S25 17 25 14.6"/></g></svg><div class="tt" style="letter-spacing:-0.268px">KETOAN_2028 thuy</div><div class="dt">Ngày tạo: 20/05/2025</div><div class="st">Không làm việc</div><div class="kb"><i></i><i></i><i></i></div></div>
<div class="card" style="left:527px;top:801.0px"><svg class="db" width="27.6" height="30" viewBox="-1 -1 28 30.4"><g fill="none" stroke="#1f9a3c" stroke-width="1.9"><ellipse cx="13" cy="5" rx="12" ry="4.2"/><path d="M1 5V24C1 26.6 6.4 28.4 13 28.4S25 26.6 25 24V5"/><path d="M1 14.6C1 17 6.4 18.6 13 18.6S25 17 25 14.6"/></g></svg><div class="tt" style="letter-spacing:0.129px">Quy trình</div><div class="dt">Ngày tạo: 06/06/2024</div><div class="st">Không làm việc</div><div class="kb"><i></i><i></i><i></i></div></div>
<div class="card" style="left:819px;top:801.0px"><svg class="db" width="27.6" height="30" viewBox="-1 -1 28 30.4"><g fill="none" stroke="#1f9a3c" stroke-width="1.9"><ellipse cx="13" cy="5" rx="12" ry="4.2"/><path d="M1 5V24C1 26.6 6.4 28.4 13 28.4S25 26.6 25 24V5"/><path d="M1 14.6C1 17 6.4 18.6 13 18.6S25 17 25 14.6"/></g></svg><div class="tt" style="letter-spacing:0.103px">Trực tiếp trên doanh thu</div><div class="dt">Ngày tạo: 01/06/2023</div><div class="st">Không làm việc</div><div class="kb"><i></i><i></i><i></i></div></div>
<div class="card" style="left:1110px;top:801.0px"><svg class="db" width="27.6" height="30" viewBox="-1 -1 28 30.4"><g fill="none" stroke="#1f9a3c" stroke-width="1.9"><ellipse cx="13" cy="5" rx="12" ry="4.2"/><path d="M1 5V24C1 26.6 6.4 28.4 13 28.4S25 26.6 25 24V5"/><path d="M1 14.6C1 17 6.4 18.6 13 18.6S25 17 25 14.6"/></g></svg><div class="tt" style="letter-spacing:-0.781px">TT133_TEST</div><div class="dt">Ngày tạo: 26/03/2024</div><div class="st">Không làm việc</div><div class="kb"><i></i><i></i><i></i></div></div>
<div class="card" style="left:236px;top:904.0px"><svg class="db" width="27.6" height="30" viewBox="-1 -1 28 30.4"><g fill="none" stroke="#1f9a3c" stroke-width="1.9"><ellipse cx="13" cy="5" rx="12" ry="4.2"/><path d="M1 5V24C1 26.6 6.4 28.4 13 28.4S25 26.6 25 24V5"/><path d="M1 14.6C1 17 6.4 18.6 13 18.6S25 17 25 14.6"/></g></svg><div class="tt" style="letter-spacing:-0.222px">TT200</div><div class="dt">Ngày tạo: 21/09/2023</div><div class="st">Không làm việc</div><div class="kb"><i></i><i></i><i></i></div></div>

<div class="a" style="left:527px;top:904px;width:81px;height:81px;border:1px solid #d6d8dd;border-radius:5px;background:#fff"></div>
<svg class="a" style="left:556px;top:933px" width="23" height="23" viewBox="0 0 23 23"><path d="M11.5 1.5V21.5M1.5 11.5H21.5" stroke="#23a12f" stroke-width="3"/></svg>
<div class="a" style="left:378px;top:963px;width:127px;height:21px;border:1px solid #c0c4cc;border-right:none;border-bottom:none;border-radius:5px 0 0 0;background:#fff"></div>
<svg class="a" style="left:385px;top:967px" width="15" height="15" viewBox="0 0 15 15"><g fill="none" stroke-width="3.2"><path d="M7.5 2A5.5 5.5 0 0 0 2 7.5" stroke="#1e6ff0"/><path d="M13 7.5A5.5 5.5 0 0 0 7.5 2" stroke="#29a83a"/><path d="M7.5 13A5.5 5.5 0 0 0 13 7.5" stroke="#f7c600"/><path d="M2 7.5A5.5 5.5 0 0 0 7.5 13" stroke="#ec1c24"/></g></svg>
<div class="a" style="left:404px;top:968px;font-size:9.4px;line-height:11px;color:#2a9a3c;white-space:nowrap">Dữ liệu đồng bộ AMIS</div>
<div class="a" style="left:443px;top:848px;width:166px;height:56px;border:1px solid #cdd1d6;background:#fff;box-shadow:0 1px 3px rgba(0,0,0,0.08)"></div>
<div class="a" style="left:454px;top:857px;font-size:12px;line-height:15px;color:#2a2a2a;white-space:nowrap">Thêm dữ liệu mới</div>
<div class="a" style="left:454px;top:882px;font-size:12px;line-height:15px;color:#2a2a2a;white-space:nowrap">Thêm dữ liệu từ năm trước</div>
<div class="a" style="left:444px;top:872px;width:166px;height:32px;border:3px solid #e8453c"></div>
</div></div>
<div class="a" style="left:0;top:0;width:1505px;height:992px">
<div class="si" style="top:260px"><span class="sic"><svg width="20" height="20" viewBox="0 0 20 20" style="overflow:visible"><circle cx="8.9" cy="10" r="9.1" fill="#1640e0"/><path d="M3 6.2C3 4.6 4.4 4.4 5.3 5.1L6 5.6H11.8L12.5 5.1C13.4 4.4 14.8 4.6 14.8 6.2V12C14.8 13.6 13.8 14.8 12 14.8H5.8C4 14.8 3 13.6 3 12Z" fill="#fff"/><rect x="4.1" y="8.8" width="9.6" height="4.6" rx="2.3" fill="#0b1b6e"/><circle cx="7" cy="11" r="0.9" fill="#a8c8ff"/><circle cx="10.8" cy="11" r="0.9" fill="#a8c8ff"/></svg></span><span class="stx">Trợ lý AI</span></div>
<div class="si act" style="top:296px"><span class="sic"><svg width="20" height="20" viewBox="0 0 20 20" style="overflow:visible"><g stroke="#f2f2f2" stroke-width="1.3" fill="none" stroke-linejoin="round"><path d="M8.2 5.1V11.7L14.6 9.6A6.6 6.6 0 1 1 8.2 5.1Z"/><path d="M10.6 1.6L16.4 5.1L10.6 8.2Z"/></g></svg></span><span class="stx">Tổng quan</span></div>
<div class="si" style="top:332px"><span class="sic"><svg width="20" height="20" viewBox="0 0 20 20" style="overflow:visible"><g stroke="#c4c8c8" stroke-width="1.25" fill="none" stroke-linecap="round" stroke-linejoin="round"><path d="M6.8 7.6C4.5 8.7 3.3 10.7 3.3 12.8C3.3 16 5.9 18.2 9.1 18.2S14.9 16 14.9 12.8C14.9 10.7 13.7 8.7 11.4 7.6"/><path d="M4.3 2.5C6 3.1 7.2 2.9 9 2.4S12 2 13.6 2.5L11.4 7.6H6.8Z"/></g></svg></span><span class="stx">Tiền mặt</span></div>
<div class="si" style="top:368px"><span class="sic"><svg width="20" height="20" viewBox="0 0 20 20" style="overflow:visible"><g stroke="#c4c8c8" stroke-width="1.25" fill="none" stroke-linecap="round" stroke-linejoin="round"><path d="M7.2 4.6H9.6"/><path d="M5.4 7.4H12.4"/><path d="M2.6 10.6H15.4"/><path d="M4.3 10.6V16.3M7.4 10.6V16.3M10.8 10.6V16.3M13.8 10.6V16.3"/><path d="M1.8 16.7H16.2"/></g></svg></span><span class="stx">Tiền gửi</span></div>
<div class="si" style="top:404px"><span class="sic"><svg width="20" height="20" viewBox="0 0 20 20" style="overflow:visible"><g stroke="#c4c8c8" stroke-width="1.25" fill="none" stroke-linecap="round" stroke-linejoin="round"><path d="M3.6 7.4H14.8L16.1 17.4Q16.2 18.2 15.4 18.2H2.6Q1.8 18.2 1.9 17.4Z"/><path d="M5.7 9.5V6.5A3.3 3.3 0 0 1 12.3 6.5V9.5"/></g></svg></span><span class="stx">Mua hàng</span></div>
<div class="si" style="top:440px"><span class="sic"><svg width="20" height="20" viewBox="0 0 20 20" style="overflow:visible"><g stroke="#c4c8c8" stroke-width="1.25" fill="none" stroke-linecap="round" stroke-linejoin="round"><path d="M1.2 2.3C2.6 2.6 3.4 3.3 3.9 5.5L5.6 12.8H16L17.6 6H4.3"/></g><circle cx="7.4" cy="17" r="1.1" fill="#c4c8c8"/><circle cx="13.1" cy="17" r="1.1" fill="#c4c8c8"/></svg></span><span class="stx">Bán hàng</span></div>
<div class="si" style="top:476px"><span class="sic"><svg width="20" height="20" viewBox="0 0 20 20" style="overflow:visible"><g stroke="#c4c8c8" stroke-width="1.25" fill="none" stroke-linecap="round" stroke-linejoin="round"><path d="M4.2 2.8H11.5L15.1 6.4V16.6Q15.1 17.9 13.9 17.9H4.2Q3 17.9 3 16.6V4.1Q3 2.8 4.2 2.8Z"/><path d="M11.5 2.8V6.4H15.1"/><path d="M6 9.8H11.6M6 12.9H11.6"/></g></svg></span><span class="stx">Quản lý hóa đơn</span></div>
<div class="si" style="top:512px"><span class="sic"><svg width="20" height="20" viewBox="0 0 20 20" style="overflow:visible"><g stroke="#c4c8c8" stroke-width="1.25" fill="none" stroke-linecap="round" stroke-linejoin="round"><path d="M1.2 10.6V6.6L8.6 3L16.6 6.6V10.6"/><path d="M1.2 17H16.6"/><path d="M6.6 13.6V9.2H10.6V13.6"/><path d="M4.6 17V13.6H12.6V17"/><path d="M8.6 13.6V17"/></g></svg></span><span class="stx">Kho</span></div>
<div class="si" style="top:548px"><span class="sic"><svg width="20" height="20" viewBox="0 0 20 20" style="overflow:visible"><g stroke="#c4c8c8" stroke-width="1.25" fill="none" stroke-linecap="round" stroke-linejoin="round"><path d="M2.2 5.2L4.6 2.8L16 14.2Q16.6 15 16 15.8L15 16.8Q14.2 17.4 13.4 16.8Z"/><path d="M5.8 6.4L7.8 4.4"/><path d="M9.4 3.6L11.4 1.6L16.8 7L14.8 9Z"/><path d="M11.5 6.7L2.6 15.6Q2 16.4 2.6 17.1L3.3 17.8Q4 18.4 4.8 17.8L13.2 9"/></g></svg></span><span class="stx">Công cụ dụng cụ</span></div>
<div class="si" style="top:584px"><span class="sic"><svg width="20" height="20" viewBox="0 0 20 20" style="overflow:visible"><g stroke="#c4c8c8" stroke-width="1.25" fill="none" stroke-linecap="round" stroke-linejoin="round"><path d="M3.2 3.6Q9.6 -0.2 15.8 3.6"/><path d="M4.9 8.6L5.6 5.9Q5.9 5.2 6.7 5.2H12.5Q13.3 5.2 13.6 5.9L14.3 8.6"/><path d="M2.2 9.8Q2.2 8.6 3.4 8.6H15.8Q17 8.6 17 9.8V14.3H2.2Z"/><path d="M4 14.3V16.5Q4 17 4.5 17H6Q6.5 17 6.5 16.5V14.3M12.7 14.3V16.5Q12.7 17 13.2 17H14.7Q15.2 17 15.2 16.5V14.3"/><path d="M5 11.3V11.6M14.2 11.3V11.6"/></g></svg></span><span class="stx">Tài sản cố định</span></div>
<div class="si" style="top:620px"><span class="sic"><svg width="20" height="20" viewBox="0 0 20 20" style="overflow:visible"><g stroke="#c4c8c8" stroke-width="1.25" fill="none" stroke-linecap="round" stroke-linejoin="round"><path d="M4.1 7.4V4.4Q4.1 3 5.5 3H13.1Q14.5 3 14.5 4.4V7.4"/><path d="M2 11V17.6Q2 18.6 3 18.6H15.6Q16.6 18.6 16.6 17.6V11"/><path d="M2 11.6L9.3 15.2L16.6 11.6"/><path d="M11 6.4Q10.6 5.6 9.4 5.6Q8 5.6 8 6.8Q8 7.8 9.4 8Q10.9 8.2 10.9 9.3Q10.9 10.6 9.3 10.6Q8.1 10.6 7.7 9.8M9.3 4.6V11.6"/></g></svg></span><span class="stx">Tiền lương</span></div>
<div class="si" style="top:656px"><span class="sic"><svg width="20" height="20" viewBox="0 0 20 20" style="overflow:visible"><g stroke="#c4c8c8" stroke-width="1.25" fill="none" stroke-linecap="round" stroke-linejoin="round"><path d="M2.4 6.2L9.1 3L15.8 6.2Z"/><path d="M3.6 7V14.6M6.6 7V14.6M10.6 7V14.6M14.1 7V14.6"/><path d="M1.6 16H16.6"/></g></svg></span><span class="stx">Thuế</span></div>
<div class="si" style="top:692px"><span class="sic"><svg width="20" height="20" viewBox="0 0 20 20" style="overflow:visible"><g stroke="#c4c8c8" stroke-width="1.25" fill="none" stroke-linecap="round" stroke-linejoin="round"><path d="M10.2 3.6H16.2V9.6L8.4 17.4Q7.9 17.9 7.4 17.4L2.4 12.4Q1.9 11.9 2.4 11.4Z"/><circle cx="13.4" cy="6.4" r="0.6"/><path d="M9.9 9.4Q9.2 8.7 8.4 9.4Q7.7 10.1 8.5 10.8Q9.3 11.5 8.6 12.2Q7.8 12.9 7 12.2"/></g></svg></span><span class="stx">Giá thành</span></div>
<div class="si" style="top:728px"><span class="sic"><svg width="20" height="20" viewBox="0 0 20 20" style="overflow:visible"><g stroke="#c4c8c8" stroke-width="1.25" fill="none" stroke-linecap="round" stroke-linejoin="round" stroke-width="1.4"><circle cx="7.1" cy="9.1" r="7.2"/><path d="M8.6 2.2L2.2 9.3L5.4 12.6"/><path d="M8.8 5.7L12.2 9.1L5.8 15.9"/></g></svg></span><span class="stx">Kết nối vay vốn</span></div>
<div class="si" style="top:764px"><span class="sic"><svg width="20" height="20" viewBox="0 0 20 20" style="overflow:visible"><g stroke="#c4c8c8" stroke-width="1.25" fill="none" stroke-linecap="round" stroke-linejoin="round"><path d="M4.2 3H14.6Q15.6 3 15.6 4V17.7Q15.6 18.7 14.6 18.7H4.2Z"/><path d="M2.6 5.6H5.4M2.6 8.6H5.4M2.6 11.6H5.4M2.6 14.6H5.4"/><path d="M10.7 8.2Q10.3 7.4 9.2 7.4Q8 7.4 8 8.5Q8 9.4 9.2 9.6Q10.6 9.8 10.6 10.8Q10.6 12 9.1 12Q8 12 7.6 11.2M9.1 6.4V13"/></g></svg></span><span class="stx">Tổng hợp</span></div>
<div class="si" style="top:800px"><span class="sic"><svg width="20" height="20" viewBox="0 0 20 20" style="overflow:visible"><g stroke="#c4c8c8" stroke-width="1.25" fill="none" stroke-linecap="round" stroke-linejoin="round"><circle cx="8.8" cy="10.8" r="7.4" stroke-dasharray="3.6 2.2"/><path d="M10.6 8.6Q10.2 7.8 9 7.8Q7.7 7.8 7.7 8.9Q7.7 9.9 9 10.1Q10.4 10.3 10.4 11.4Q10.4 12.7 8.9 12.7Q7.7 12.7 7.3 11.9M9 6.6V14"/></g></svg></span><span class="stx">Ngân sách</span></div>
<div class="si" style="top:836px"><span class="sic"><svg width="20" height="20" viewBox="0 0 20 20" style="overflow:visible"><g stroke="#c4c8c8" stroke-width="2.3"><path d="M3 14V17.6M9.1 11.6V17.6M14.6 6V17.6"/></g></svg></span><span class="stx">Báo cáo</span></div>
<div class="si" style="top:872px"><span class="sic"><svg width="20" height="20" viewBox="0 0 20 20" style="overflow:visible"><g stroke="#c4c8c8" stroke-width="1.25" fill="none" stroke-linecap="round" stroke-linejoin="round"><path d="M2 12.5L6.6 8.4L9.2 10.6L15.2 3.8"/><path d="M12 3.6H15.6V7.2"/><path d="M1.4 14.2H17" stroke-dasharray="1.6 1.6"/><path d="M1.6 2.2V6.6" stroke-dasharray="1 2"/><path d="M16 11V11.3"/></g></svg></span><span class="stx">Phân tích tài chính</span></div>
<div class="si" style="top:908px"><span class="sic"><svg width="20" height="20" viewBox="0 0 20 20" style="overflow:visible"><g stroke="#c4c8c8" stroke-width="1.5" stroke-linecap="round"><path d="M7.2 4.5H15.6M7.2 9.4H15.6M7.2 13.6H15.6"/><path d="M3 4.5H3.4M3 9.4H3.4M3 13.6H3.4"/></g></svg></span><span class="stx">Danh mục</span></div>

<div class="a" style="left:40px;top:54px;width:108px;height:24px;border:1.2px solid #c9cccc;border-radius:12px"></div>
<svg class="a" style="left:49px;top:60px" width="12" height="12" viewBox="0 0 12 12"><path d="M6 1V11M1 6H11" stroke="#1ba9b7" stroke-width="2"/></svg>
<div class="a" style="left:64px;top:58px;font-size:12.5px;line-height:15px;color:#fff;-webkit-text-stroke:0.45px #fff;white-space:nowrap">Thêm nhanh</div>
<div class="a" style="left:184px;top:89px;width:5px;height:779px;background:#d3d5d8"></div>
<div class="a" style="left:184px;top:868px;width:5px;height:87px;background:#f0f0f0"></div>
<div class="a" style="left:7px;top:101px;font-size:11.6px;line-height:14px;color:#fff;-webkit-text-stroke:0.5px #fff;white-space:nowrap">HAY DÙNG</div>
<svg class="a" style="left:75px;top:104px" width="8" height="7" viewBox="0 0 8 7"><path d="M0.5 1H7.5L4 5.5Z" fill="#fff"/></svg>
<svg class="a" style="left:166px;top:99px" width="16" height="16" viewBox="0 0 16 16"><path d="M11.5 1.6L14.4 4.5L5 13.9L1.5 14.5L2.1 11Z M10 3.1L12.9 6" fill="none" stroke="#e8e8e8" stroke-width="1" stroke-linejoin="round"/></svg>
<div class="a" style="left:13px;top:129px;width:160px;height:48px;border:1px dashed #7d8485"></div>
<div class="a" style="left:29px;top:138px;width:140px;font-size:12px;line-height:16px;color:#1a9cf2">Ghim các tính năng hay<br>dùng tại đây</div>
<div class="a" style="left:13px;top:184px;width:162px;height:31px;border:1px solid #243033;border-radius:3px;background:#101c1e"></div>
<div class="a" style="left:13px;top:194px;width:162px;text-align:center;font-size:12px;line-height:15px;color:#fff;white-space:nowrap">Hay dùng trang này</div>
<div class="a" style="left:7px;top:235px;font-size:11.6px;line-height:14px;color:#fff;-webkit-text-stroke:0.5px #fff;white-space:nowrap">PHÂN HỆ</div>
<svg class="a" style="left:66px;top:239px" width="8" height="7" viewBox="0 0 8 7"><path d="M0.5 1H7.5L4 5.5Z" fill="#fff"/></svg>
<svg class="a" style="left:166px;top:234px" width="16" height="16" viewBox="0 0 16 16"><path d="M11.5 1.6L14.4 4.5L5 13.9L1.5 14.5L2.1 11Z M10 3.1L12.9 6" fill="none" stroke="#e8e8e8" stroke-width="1" stroke-linejoin="round"/></svg>
<div class="a" style="left:1px;top:955px;width:183px;height:1px;background:#cfd1d3"></div><div class="a" style="left:1px;top:956px;width:188px;height:35px;background:#3a3b3e"></div>
<svg class="a" style="left:16px;top:970px" width="8" height="10" viewBox="0 0 8 10"><path d="M6 1.8L3 5L6 8.2" fill="none" stroke="#fff" stroke-width="2" stroke-linecap="round" stroke-linejoin="round"/></svg>
<div class="a" style="left:42px;top:968px;font-size:12.3px;-webkit-text-stroke:0.2px #fff;line-height:15px;color:#fff;white-space:nowrap">Thu gọn</div>
</div>
<div id="frame"></div>
</body></html>
